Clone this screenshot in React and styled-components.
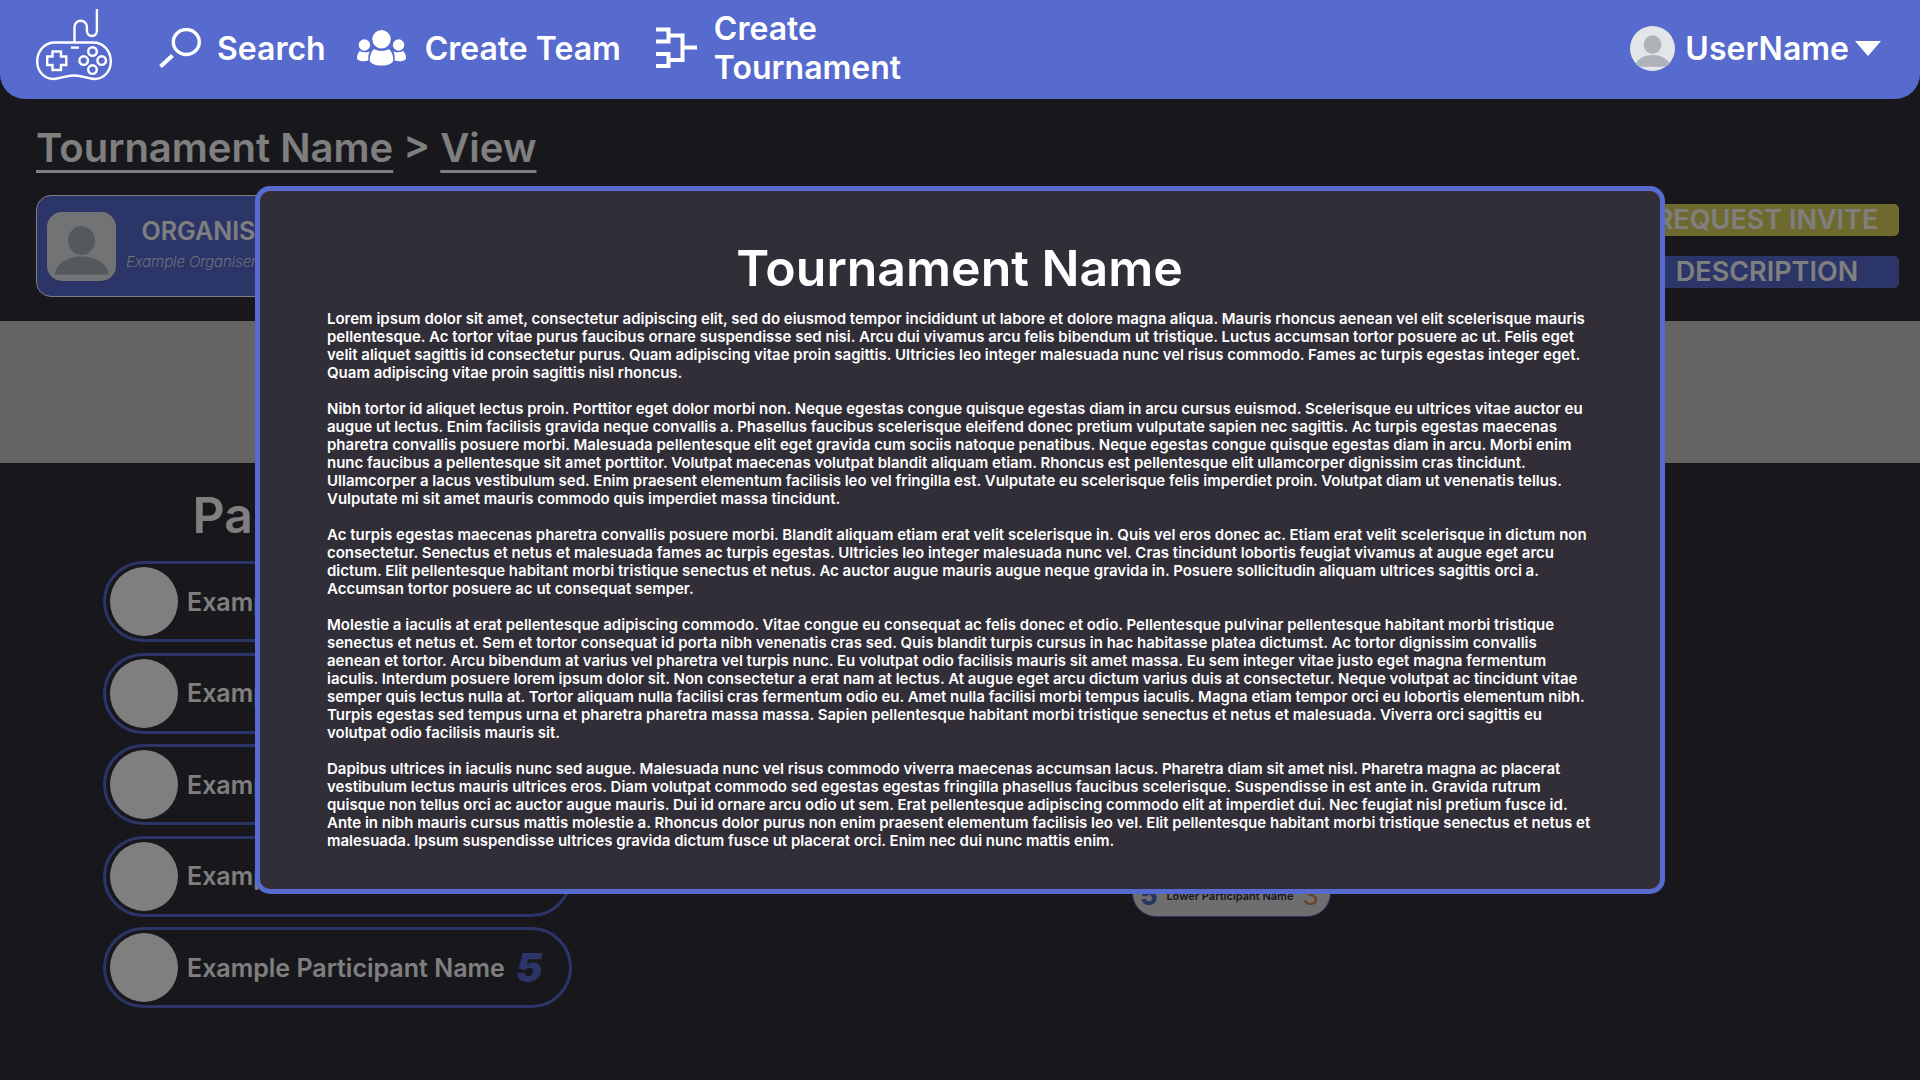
import React from "react";
import styled, { createGlobalStyle } from "styled-components";

const color = {
  brand: "#576ace",
  surface: "#312e38",
  white: "#ffffff",
  banner: "#c8c8c8",
  invite: "#dcd45e",
  avatar: "#e3e6e8",
  avatarFigure: "#adb3b8",
  match: "#dcdcdc",
  bronze: "#d0884c",
};

const Global = createGlobalStyle`
  *, *::before, *::after { box-sizing: border-box; }
  html, body, #root { height: 100%; }
  body {
    margin: 0;
    background: ${color.surface};
    color: ${color.white};
    font-family: Inter, "Liberation Sans", sans-serif;
    font-weight: 600;
  }
  h1, h2, p, ol { margin: 0; padding: 0; }
  a { color: inherit; }
  button { font: inherit; color: inherit; border: 0; padding: 0; background: none; cursor: pointer; }
  svg { flex: none; }
`;

const Page = styled.div`
  position: relative;
  min-height: 100%;
  display: flex;
  flex-direction: column;
`;

const Nav = styled.nav`
  position: relative;
  z-index: 2;
  display: flex;
  align-items: center;
  height: 99px;
  padding: 0 39px 3px 36px;
  background: ${color.brand};
  border-radius: 0 0 25px 25px;
  font-size: 32px;
  line-height: 39px;
`;

const LogoLink = styled.a`
  display: flex;
  margin-right: 47px;
`;

const NavLinks = styled.div`
  display: flex;
  align-items: center;
  gap: 31px;
  flex: 1;
`;

const NavLink = styled.a`
  display: flex;
  align-items: center;
  gap: 16px;
  text-decoration: none;
`;

const NavLabel = styled.span`
  max-width: 200px;
`;

const UserButton = styled.button`
  display: flex;
  align-items: center;
  gap: 6px;
`;

const UserLabel = styled.span`
  margin-left: 4px;
`;

const Main = styled.main`
  flex: 1;
  display: flex;
  flex-direction: column;
`;

const Breadcrumb = styled.div`
  padding: 25px 36px 0;
  font-size: 40px;
  line-height: 48px;

  a {
    text-decoration: underline;
    text-decoration-thickness: 3px;
    text-underline-offset: 8px;
    text-decoration-skip-ink: none;
  }
`;

const SummaryRow = styled.div`
  display: flex;
  justify-content: space-between;
  align-items: center;
  padding: 23px 21px 24px 36px;
`;

const OrganiserCard = styled.section`
  display: flex;
  align-items: center;
  gap: 10px;
  height: 102px;
  padding: 0 10px;
  background: ${color.brand};
  border: 1px solid ${color.white};
  border-radius: 15px;
`;

const OrganiserText = styled.div`
  padding-top: 2px;
  text-align: center;
`;

const OrganiserRole = styled.h2`
  font-size: 25px;
  line-height: 30px;
  font-weight: 600;
`;

const OrganiserName = styled.p`
  font-size: 15px;
  line-height: 32px;
  font-weight: 200;
  font-style: italic;
`;

const Actions = styled.div`
  display: flex;
  flex-direction: column;
  gap: 20px;
  width: 264px;
`;

const ActionButton = styled.button`
  height: 32px;
  border-radius: 5px;
  background: ${(p) => (p.$tone === "invite" ? color.invite : color.brand)};
  font-size: 27px;
  line-height: 32px;
`;

const Banner = styled.div`
  height: 142px;
  background: ${color.banner};
`;

const Columns = styled.div`
  display: flex;
  justify-content: space-between;
  align-items: flex-end;
  padding: 22px 589px 0 103px;
`;

const Participants = styled.section`
  width: 469px;
`;

const SectionTitle = styled.h2`
  font-size: 50px;
  line-height: 60px;
  font-weight: 600;
  text-align: center;
`;

const ParticipantList = styled.ol`
  list-style: none;
  display: flex;
  flex-direction: column;
  justify-content: space-between;
  height: 447px;
  margin-top: 16px;
`;

const Participant = styled.li`
  display: flex;
  align-items: center;
  height: 81px;
  padding: 0 4px;
  border: 3px solid ${color.brand};
  border-radius: 41px;
  font-size: 25px;
`;

const ParticipantAvatar = styled.span`
  width: 68px;
  height: 69px;
  margin-right: 9px;
  border-radius: 50%;
  background: ${color.white};
`;

const Seed = styled.span`
  margin-left: 11px;
  font-size: 40px;
  font-weight: 900;
  font-style: italic;
  color: ${color.brand};
`;

const Match = styled.section`
  width: 199px;
  margin-bottom: 91px;
  background: ${color.match};
  border: 1px solid ${color.brand};
  border-radius: 24px;
  color: ${color.surface};
`;

const MatchSide = styled.div`
  display: flex;
  align-items: center;
  justify-content: space-between;
  height: 47px;
  padding: 7px 11px 0 7px;
  font-size: 11px;
`;

const MatchSeed = styled.span`
  font-size: 27px;
  line-height: 30px;
  font-weight: 800;
  color: ${color.brand};
`;

const MatchScore = styled.span`
  font-size: 27px;
  line-height: 30px;
  font-weight: 400;
  color: ${color.bronze};
`;

const Backdrop = styled.div`
  position: fixed;
  inset: 0;
  z-index: 1;
  display: flex;
  align-items: center;
  justify-content: center;
  background: rgba(0, 0, 0, 0.5);
`;

const Dialog = styled.section`
  width: 1410px;
  max-width: calc(100% - 40px);
  padding: 47px 68px 39px 67px;
  background: ${color.surface};
  border: 5px solid ${color.brand};
  border-radius: 15px;
`;

const DialogTitle = styled.h1`
  font-size: 50px;
  line-height: 60px;
  font-weight: 600;
  text-align: center;
  margin-bottom: 12px;
`;

const DialogText = styled.div`
  display: flex;
  flex-direction: column;
  gap: 18px;
  font-size: 15px;
  line-height: 18px;
`;

const AvatarFrame = styled.svg`
  display: block;
  width: ${(p) => p.$size}px;
  height: ${(p) => p.$size}px;
  background: ${color.avatar};
  border-radius: ${(p) => (p.$round ? "50%" : "15px")};
`;

function Avatar({ size, round }) {
  return (
    <AvatarFrame $size={size} $round={round} viewBox="0 0 69 69" aria-hidden="true">
      <ellipse cx="34.5" cy="28.5" rx="13.5" ry="14.5" fill={color.avatarFigure} />
      <path d="M7.5 62.5C9 52 20 44.5 34.5 44.5S60.5 52 62 62.5Z" fill={color.avatarFigure} />
    </AvatarFrame>
  );
}

function LogoIcon() {
  return (
    <svg width="76" height="78" viewBox="0 0 76 78" fill="none" stroke="#fff" strokeWidth="2.4" aria-hidden="true">
      <path d="M38.5 33.5V18a6.2 6.2 0 0 1 12.4 0v4a5 5 0 0 0 10 0V0" />
      <path d="M19 33.5H57C67.5 33.5 74.8 42 74.8 52.5C74.8 62.5 67.5 70 58.5 70C52 70 47 66.5 38 66.5S24 70 17.5 70C8.5 70 1.2 62.5 1.2 52.5C1.2 42 8.5 33.5 19 33.5Z" />
      <path d="M35 38.6H43" />
      <path d="M16.5 42.5H25V47.5H30.3V56H25V61H16.5V56H11.2V47.5H16.5Z" />
      <circle cx="56.5" cy="42.5" r="4.3" />
      <circle cx="47.7" cy="51.6" r="4.3" />
      <circle cx="65.7" cy="51.6" r="4.3" />
      <circle cx="56.5" cy="60.6" r="4.3" />
    </svg>
  );
}

function SearchIcon() {
  return (
    <svg width="42" height="40" viewBox="0 0 42 40" fill="none" stroke="#fff" aria-hidden="true">
      <ellipse cx="27.3" cy="14" rx="13" ry="12.5" strokeWidth="3.4" />
      <path d="M1.5 38.5L13.5 27.5" strokeWidth="4" />
    </svg>
  );
}

function TeamIcon() {
  return (
    <svg width="52" height="36" viewBox="0 0 52 36" fill="#fff" aria-hidden="true">
      <circle cx="24.5" cy="9.2" r="9.2" />
      <circle cx="7.4" cy="15" r="5.7" />
      <circle cx="41.6" cy="15" r="5.7" />
      <path d="M17 19.2Q24.5 22.8 32 19.2C35 21.5 36.3 26 36.3 30C36.3 33.5 31 35.5 24.5 35.5S12.7 33.5 12.7 30C12.7 26 14 21.5 17 19.2Z" />
      <path d="M2.8 21Q7.5 23.4 12.6 21.4C11.4 24 11 27 11.4 30.5C6 32 0 31 0 28C0 25.5 1 22.5 2.8 21Z" />
      <path d="M46.2 21Q41.5 23.4 36.4 21.4C37.6 24 38 27 37.6 30.5C43 32 49 31 49 28C49 25.5 48 22.5 46.2 21Z" />
    </svg>
  );
}

function BracketIcon() {
  return (
    <svg width="46" height="42" viewBox="-4 0 46 42" fill="none" stroke="#fff" strokeWidth="4" aria-hidden="true">
      <path d="M0 2.5H12.5V14.5H0M0 27H12.5V39H0" />
      <path d="M12.5 8.5H26.500V33H12.500M26.500 20.500H41" />
    </svg>
  );
}

function Caret() {
  return (
    <svg width="26" height="15" viewBox="0 0 26 15" fill="#fff" aria-hidden="true">
      <path d="M0 0H26L13 15Z" />
    </svg>
  );
}

const participants = [1, 2, 3, 4, 5];

const description = [
  "Lorem ipsum dolor sit amet, consectetur adipiscing elit, sed do eiusmod tempor incididunt ut labore et dolore magna aliqua. Mauris rhoncus aenean vel elit scelerisque mauris pellentesque. Ac tortor vitae purus faucibus ornare suspendisse sed nisi. Arcu dui vivamus arcu felis bibendum ut tristique. Luctus accumsan tortor posuere ac ut. Felis eget velit aliquet sagittis id consectetur purus. Quam adipiscing vitae proin sagittis. Ultricies leo integer malesuada nunc vel risus commodo. Fames ac turpis egestas integer eget. Quam adipiscing vitae proin sagittis nisl rhoncus.",
  "Nibh tortor id aliquet lectus proin. Porttitor eget dolor morbi non. Neque egestas congue quisque egestas diam in arcu cursus euismod. Scelerisque eu ultrices vitae auctor eu augue ut lectus. Enim facilisis gravida neque convallis a. Phasellus faucibus scelerisque eleifend donec pretium vulputate sapien nec sagittis. Ac turpis egestas maecenas pharetra convallis posuere morbi. Malesuada pellentesque elit eget gravida cum sociis natoque penatibus. Neque egestas congue quisque egestas diam in arcu. Morbi enim nunc faucibus a pellentesque sit amet porttitor. Volutpat maecenas volutpat blandit aliquam etiam. Rhoncus est pellentesque elit ullamcorper dignissim cras tincidunt. Ullamcorper a lacus vestibulum sed. Enim praesent elementum facilisis leo vel fringilla est. Vulputate eu scelerisque felis imperdiet proin. Volutpat diam ut venenatis tellus. Vulputate mi sit amet mauris commodo quis imperdiet massa tincidunt.",
  "Ac turpis egestas maecenas pharetra convallis posuere morbi. Blandit aliquam etiam erat velit scelerisque in. Quis vel eros donec ac. Etiam erat velit scelerisque in dictum non consectetur. Senectus et netus et malesuada fames ac turpis egestas. Ultricies leo integer malesuada nunc vel. Cras tincidunt lobortis feugiat vivamus at augue eget arcu dictum. Elit pellentesque habitant morbi tristique senectus et netus. Ac auctor augue mauris augue neque gravida in. Posuere sollicitudin aliquam ultrices sagittis orci a. Accumsan tortor posuere ac ut consequat semper.",
  "Molestie a iaculis at erat pellentesque adipiscing commodo. Vitae congue eu consequat ac felis donec et odio. Pellentesque pulvinar pellentesque habitant morbi tristique senectus et netus et. Sem et tortor consequat id porta nibh venenatis cras sed. Quis blandit turpis cursus in hac habitasse platea dictumst. Ac tortor dignissim convallis aenean et tortor. Arcu bibendum at varius vel pharetra vel turpis nunc. Eu volutpat odio facilisis mauris sit amet massa. Eu sem integer vitae justo eget magna fermentum iaculis. Interdum posuere lorem ipsum dolor sit. Non consectetur a erat nam at lectus. At augue eget arcu dictum varius duis at consectetur. Neque volutpat ac tincidunt vitae semper quis lectus nulla at. Tortor aliquam nulla facilisi cras fermentum odio eu. Amet nulla facilisi morbi tempus iaculis. Magna etiam tempor orci eu lobortis elementum nibh. Turpis egestas sed tempus urna et pharetra pharetra massa massa. Sapien pellentesque habitant morbi tristique senectus et netus et malesuada. Viverra orci sagittis eu volutpat odio facilisis mauris sit.",
  "Dapibus ultrices in iaculis nunc sed augue. Malesuada nunc vel risus commodo viverra maecenas accumsan lacus. Pharetra diam sit amet nisl. Pharetra magna ac placerat vestibulum lectus mauris ultrices eros. Diam volutpat commodo sed egestas egestas fringilla phasellus faucibus scelerisque. Suspendisse in est ante in. Gravida rutrum quisque non tellus orci ac auctor augue mauris. Dui id ornare arcu odio ut sem. Erat pellentesque adipiscing commodo elit at imperdiet dui. Nec feugiat nisl pretium fusce id. Ante in nibh mauris cursus mattis molestie a. Rhoncus dolor purus non enim praesent elementum facilisis leo vel. Elit pellentesque habitant morbi tristique senectus et netus et malesuada. Ipsum suspendisse ultrices gravida dictum fusce ut placerat orci. Enim nec dui nunc mattis enim.",
];

export default function App() {
  return (
    <Page>
      <Global />
      <Nav>
        <LogoLink href="#home" aria-label="Home">
          <LogoIcon />
        </LogoLink>
        <NavLinks>
          <NavLink href="#search">
            <SearchIcon />
            <NavLabel>Search</NavLabel>
          </NavLink>
          <NavLink href="#team">
            <TeamIcon />
            <NavLabel>Create Team</NavLabel>
          </NavLink>
          <NavLink href="#tournament">
            <BracketIcon />
            <NavLabel>Create Tournament</NavLabel>
          </NavLink>
        </NavLinks>
        <UserButton type="button">
          <Avatar size={45} round />
          <UserLabel>UserName</UserLabel>
          <Caret />
        </UserButton>
      </Nav>

      <Main>
        <Breadcrumb>
          <a href="#tournament-name">Tournament Name</a> &gt; <a href="#view">View</a>
        </Breadcrumb>
        <SummaryRow>
          <OrganiserCard>
            <Avatar size={69} />
            <OrganiserText>
              <OrganiserRole>ORGANISER</OrganiserRole>
              <OrganiserName>Example Organiser Name</OrganiserName>
            </OrganiserText>
          </OrganiserCard>
          <Actions>
            <ActionButton type="button" $tone="invite">REQUEST INVITE</ActionButton>
            <ActionButton type="button">DESCRIPTION</ActionButton>
          </Actions>
        </SummaryRow>
        <Banner />
        <Columns>
          <Participants>
            <SectionTitle>Participants</SectionTitle>
            <ParticipantList>
              {participants.map((seed) => (
                <Participant key={seed}>
                  <ParticipantAvatar />
                  Example Participant Name
                  <Seed>{seed}</Seed>
                </Participant>
              ))}
            </ParticipantList>
          </Participants>
          <Match>
            <MatchSide>
              <MatchSeed>5</MatchSeed>
              Lower Participant Name
              <MatchScore>3</MatchScore>
            </MatchSide>
          </Match>
        </Columns>
      </Main>

      <Backdrop>
        <Dialog role="dialog" aria-labelledby="dialog-title">
          <DialogTitle id="dialog-title">Tournament Name</DialogTitle>
          <DialogText>
            {description.map((text) => (
              <p key={text.slice(0, 12)}>{text}</p>
            ))}
          </DialogText>
        </Dialog>
      </Backdrop>
    </Page>
  );
}
